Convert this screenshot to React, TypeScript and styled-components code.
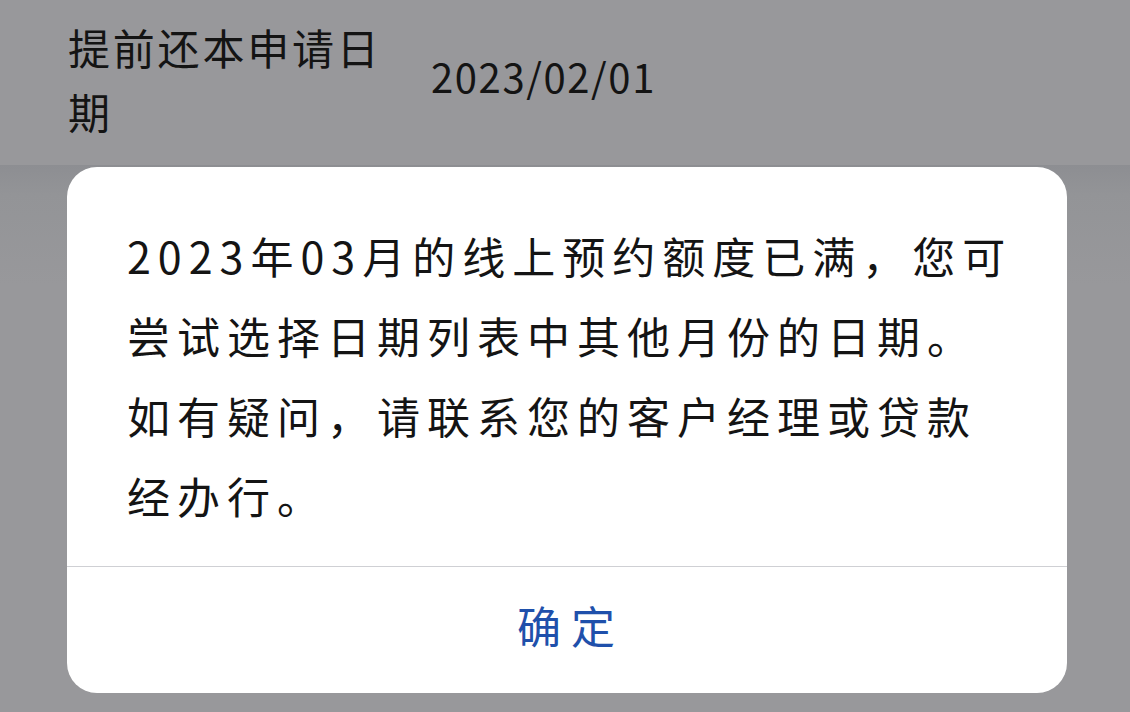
import styled, { createGlobalStyle } from 'styled-components';

const GlobalStyle = createGlobalStyle`
    html, body {
        margin: 0;
        padding: 0;
        background: #98989b;
        overflow: hidden;
    }
    body {
        font-family: "Noto Sans CJK SC", "Noto Sans", sans-serif;
    }
`;

const Page = styled.div`
    width: 1130px;
    height: 712px;
    display: flex;
    flex-direction: column;
`;

const InfoRow = styled.div`
    height: 165px;
    box-sizing: border-box;
    flex-shrink: 0;
    display: grid;
    grid-template-columns: 363px auto;
    align-items: center;
    padding: 0 0 8px 68px;
    background: #98989b;
    color: #141414;
`;

const InfoLabel = styled.div`
    width: 330px;
    font-size: 42px;
    line-height: 64px;
    letter-spacing: 2.8px;
`;

const InfoValue = styled.div`
    font-size: 40px;
    letter-spacing: 1.6px;
    padding-bottom: 6px;
`;

const Overlay = styled.div`
    flex: 1;
    padding: 2px 0 0 67px;
    background: linear-gradient(#8d8e92 0px, #939497 30px, #98989b 120px);
`;

const Dialog = styled.div`
    width: 1000px;
    height: 526px;
    background: #ffffff;
    border-radius: 30px;
    display: flex;
    flex-direction: column;
    overflow: hidden;
`;

const Message = styled.div`
    padding: 48px 20px 31px 60px;
    font-size: 43px;
    line-height: 80px;
    letter-spacing: 7px;
    color: #141414;
    white-space: nowrap;
`;

const Divider = styled.div`
    height: 0;
    border-top: 1.5px solid #cfd0d4;
`;

const ConfirmButton = styled.button`
    flex: 1;
    border: none;
    background: transparent;
    font-family: inherit;
    font-size: 44px;
    letter-spacing: 10px;
    padding: 0 0 10px 8px;
    color: #1f50ab;
    cursor: pointer;
`;

const lines = [
    '2023年03月的线上预约额度已满，您可',
    '尝试选择日期列表中其他月份的日期。',
    '如有疑问，请联系您的客户经理或贷款',
    '经办行。',
];

export default function App() {
    return (
        <>
            <GlobalStyle />
            <Page>
                <InfoRow>
                    <InfoLabel>提前还本申请日期</InfoLabel>
                    <InfoValue>2023/02/01</InfoValue>
                </InfoRow>
                <Overlay>
                    <Dialog>
                        <Message>
                            {lines.map((line, i) => (
                                <div key={i}>{line}</div>
                            ))}
                        </Message>
                        <Divider />
                        <ConfirmButton>确定</ConfirmButton>
                    </Dialog>
                </Overlay>
            </Page>
        </>
    );
}
